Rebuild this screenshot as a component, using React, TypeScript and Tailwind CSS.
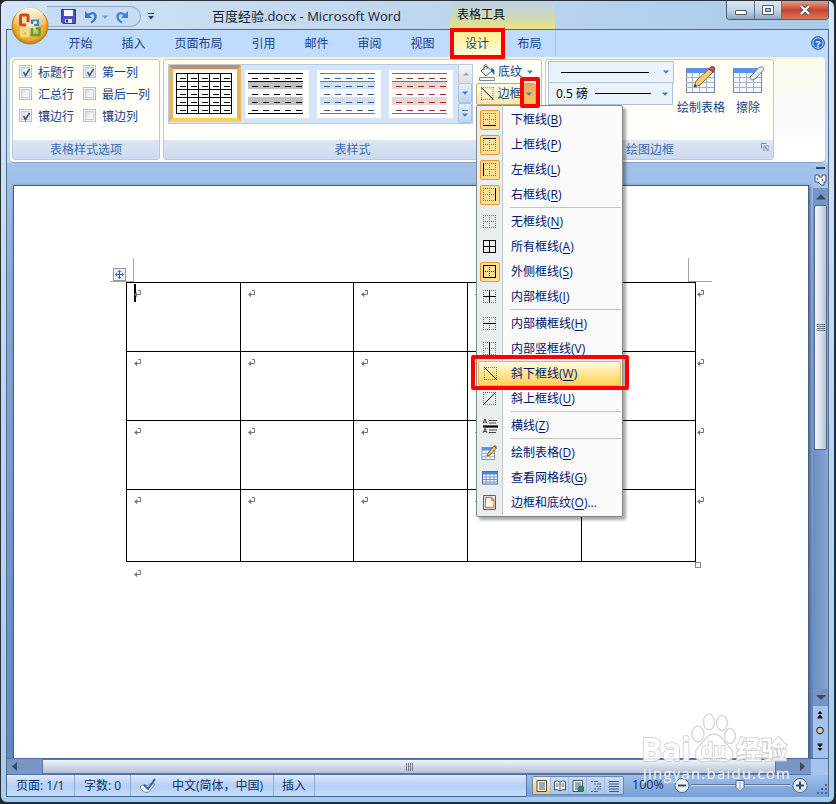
import React from 'react';
import clsx from 'clsx';

const TABS = ['开始', '插入', '页面布局', '引用', '邮件', '审阅', '视图'];

const OPTIONS = [
  [
    { label: '标题行', on: true },
    { label: '汇总行', on: false },
    { label: '镶边行', on: true },
  ],
  [
    { label: '第一列', on: true },
    { label: '最后一列', on: false },
    { label: '镶边列', on: false },
  ],
];

type MenuItem = { icon: string; label: string; k: string; on?: boolean; hot?: boolean; tail?: string };

const MENU: MenuItem[][] = [
  [
    { icon: 'bottom', label: '下框线', k: 'B', on: true },
    { icon: 'top', label: '上框线', k: 'P', on: true },
    { icon: 'left', label: '左框线', k: 'L', on: true },
    { icon: 'right', label: '右框线', k: 'R', on: true },
  ],
  [
    { icon: 'none', label: '无框线', k: 'N' },
    { icon: 'all', label: '所有框线', k: 'A' },
    { icon: 'outer', label: '外侧框线', k: 'S', on: true },
    { icon: 'inner', label: '内部框线', k: 'I' },
  ],
  [
    { icon: 'innerH', label: '内部横框线', k: 'H' },
    { icon: 'innerV', label: '内部竖框线', k: 'V' },
    { icon: 'down', label: '斜下框线', k: 'W', hot: true },
    { icon: 'up', label: '斜上框线', k: 'U' },
  ],
  [{ icon: 'rule', label: '横线', k: 'Z' }],
  [
    { icon: 'draw', label: '绘制表格', k: 'D' },
    { icon: 'grid', label: '查看网格线', k: 'G' },
    { icon: 'page', label: '边框和底纹', k: 'O', tail: '...' },
  ],
];

const ROWS = ['h-[69px]', 'h-[69px]', 'h-[69px]', 'h-[73px]'];

function Caret({ className }: { className?: string }) {
  return (
    <svg width="6" height="4" viewBox="0 0 6 4" className={clsx('shrink-0', className)}>
      <path d="M0 .5h6L3 3.8z" fill="#4a7ab8" />
    </svg>
  );
}

function BorderIcon({ kind }: { kind: string }) {
  const dots = { stroke: '#6f7480', strokeDasharray: '1 1', fill: 'none' };
  const line = { stroke: '#000', fill: 'none' };
  if (kind === 'rule') {
    return (
      <svg width="16" height="16" viewBox="0 0 16 16">
        <path d="M1 5.5 3 1l2 4.5M1.8 4h2.4M1 15l2-4.5L5 15M1.8 13.5h2.4M7 2.5h8M7 5h7M7 12h8M7 14.5h7" stroke="#333" fill="none" strokeWidth=".9" />
        <path d="M1 8.5h15" stroke="#000" strokeWidth="2.2" />
      </svg>
    );
  }
  if (kind === 'draw') {
    return (
      <svg width="17" height="17" viewBox="0 0 17 17">
        <rect x="1" y="3.5" width="12.5" height="12" fill="#f4f8ff" stroke="#7f97c0" />
        <path d="M1 3.5h12.5v3H1z" fill="#5f8fe4" />
        <path d="M1 9.5h12M1 12.5h12M5 6.5v9M9 6.5v9" stroke="#a9bbda" />
        <path d="m6 12 1-3 6-7 2.5 2L9 11z" fill="#f3c65a" stroke="#6b5126" strokeWidth=".8" />
        <path d="m12.5 2.6 1.5-1.5 2 1.7-1.3 1.7z" fill="#b9523c" />
      </svg>
    );
  }
  if (kind === 'grid') {
    return (
      <svg width="17" height="14" viewBox="0 0 17 14" className="ml-[2px]">
        <rect x=".5" y=".5" width="15" height="12.5" fill="#fff" stroke="#4a6ca8" />
        <path d="M1 1h14.500v2.500H1z" fill="#4b84e0" />
        <path d="M1 6h15M1 8.500h15M1 11h15M4 3v10M8 3v10M12 3v10" stroke="#6d93cf" />
      </svg>
    );
  }
  if (kind === 'page') {
    return (
      <svg width="15" height="17" viewBox="0 0 15 17">
        <path d="M1.500 1.500h12v14h-12z" fill="#e8f0fb" stroke="#4d6486" />
        <path d="M3.500 3.500h6l2.500 2.500v7.500H3.500z" fill="#fff" stroke="#d08a2a" strokeWidth="1.300" />
        <path d="M9.500 3v3.500H12" stroke="#d08a2a" fill="none" />
      </svg>
    );
  }
  return (
    <svg width="14" height="14" viewBox="0 0 14 14" shapeRendering={kind === 'down' || kind === 'up' ? 'auto' : 'crispEdges'}>
      {kind !== 'outer' && kind !== 'all' && <path d="M0 .5h13M0 12.500h13M.5 0v13M12.500 0v13" {...dots} />}
      {kind !== 'down' && kind !== 'up' && kind !== 'all' && kind !== 'outer' && <path d="M0 6.500h13M6.500 0v13" {...dots} />}
      {kind === 'outer' && <path d="M2 6.500h9M6.500 2v9" {...dots} stroke="#333" />}
      {kind === 'bottom' && <path d="M0 12.500h13" {...line} />}
      {kind === 'top' && <path d="M0 .5h13" {...line} />}
      {kind === 'left' && <path d="M.5 0v13" {...line} />}
      {kind === 'right' && <path d="M12.500 0v13" {...line} />}
      {(kind === 'outer' || kind === 'all') && <path d="M.5.5h12v12H.5z" {...line} />}
      {(kind === 'all' || kind === 'inner' || kind === 'innerH') && <path d="M0 6.500h13" {...line} />}
      {(kind === 'all' || kind === 'inner' || kind === 'innerV') && <path d="M6.500 0v13" {...line} />}
      {kind === 'down' && <path d="m.5.5 12 12" {...line} />}
      {kind === 'up' && <path d="m.5 12.500 12-12" {...line} />}
    </svg>
  );
}

function OfficeButton() {
  return (
    <svg width="38" height="38" viewBox="0 0 38 38" className="absolute top-[6px] left-[5px] z-10">
      <defs>
        <radialGradient id="orb" cx=".5" cy=".45" r=".55">
          <stop offset="0" stopColor="#f9f0e0" />
          <stop offset=".55" stopColor="#e9b556" />
          <stop offset=".8" stopColor="#f0a91d" />
          <stop offset="1" stopColor="#b27613" />
        </radialGradient>
        <linearGradient id="orbTop" x2="0" y2="1">
          <stop offset="0" stopColor="#fffbe8" />
          <stop offset="1" stopColor="#fff" stopOpacity=".1" />
        </linearGradient>
      </defs>
      <circle cx="19" cy="19" r="18" fill="url(#orb)" stroke="#a5854e" />
      <path d="M2.500 17a16.500 16.500 0 0 1 33 0q-16 5-33 0z" fill="url(#orbTop)" />
      <g fill="none">
        <path d="M17 15v-5.500q0-1.500-1.500-1.500H11q-1.500 0-1.500 1.500v7q0 1.500 1.500 1.500h4" stroke="#d9480f" strokeWidth="3" />
        <path d="M21 17v-3.500h6V18h-4" stroke="#3389c9" strokeWidth="2.200" />
        <path d="M17 21h-6.500v8H17v-4" stroke="#fbe08a" strokeWidth="2.400" />
        <path d="M21 21v7h7.500v-6.500H25" stroke="#58a33a" strokeWidth="2.600" />
        <path d="M12 26q3-4 5-1M23 15q2-2 3 1" stroke="#fff" strokeOpacity=".7" />
      </g>
    </svg>
  );
}

function TitleBar() {
  return (
    <div className="relative flex h-[28px] shrink-0 items-start bg-linear-to-r from-[#d2e3f6] via-[#c3d9ef] via-40% to-[#a9cbea]">
      <OfficeButton />
      <div className="mt-[5px] ml-[41px] flex h-[21px] w-[94px] items-center rounded-r-full border border-l-0 border-[#93a7c3] bg-[#c6dbf4] pl-[14px]">
        <svg width="15" height="15" viewBox="0 0 15 15" className="shrink-0">
          <path d="M.5.5h14v14H2L.5 13z" fill="#4a50c0" stroke="#343b96" />
          <path d="M3 1h9v6H3z" fill="#f4f6ff" />
          <path d="M4 10h7v4H4z" fill="#e4e6f0" />
          <path d="M5 10.500h2v3H5z" fill="#2b2f75" />
        </svg>
        <svg width="14" height="14" viewBox="0 0 14 14" className="ml-2 shrink-0">
          <path d="M4 5q6-4 7.500.5Q12 10 7 12.500" stroke="#3f72c8" strokeWidth="2.400" fill="none" />
          <path d="M1 1v7h7z" fill="#3f72c8" />
        </svg>
        <Caret className="ml-1 opacity-70" />
        <svg width="14" height="14" viewBox="0 0 14 14" className="ml-[7px] shrink-0">
          <path d="M10 5Q4 1 2.500 5.500 2 10 7 12.500" stroke="#4382cf" strokeWidth="2.400" fill="none" />
          <path d="M13 1v7H6z" fill="#4382cf" />
        </svg>
      </div>
      <svg width="6" height="7" viewBox="0 0 6 7" className="mt-[12px] ml-[7px]">
        <path d="M0 .5h6" stroke="#24426f" />
        <path d="M0 3h6L3 6.500z" fill="#24426f" />
      </svg>
      <div className="mt-[5px] ml-[58px] w-[238px] text-[13px] leading-[20px] whitespace-nowrap text-[#16202f]">百度经验.docx - Microsoft Word</div>
      <div className="mt-[2px] h-[26px] w-[106px] border-r border-[#d7d18a] bg-linear-to-b from-[#c0d3df] via-[#ccd8c0] to-[#ece27a] pt-[2px] pl-[7px] text-[12px] leading-[20px] text-[#111]">
        表格工具
      </div>
      <div className="ml-[170px] flex h-[19px] overflow-hidden rounded-b-[4px] border border-t-0 border-[#4e5d70]">
        <div className="grid w-[28px] place-items-center border-r border-[#607086] bg-linear-to-b from-[#d9e5f1] via-[#c6d6e6] to-[#8faac6]">
          <div className="mt-1 h-[5px] w-3 rounded-[1px] border border-[#545b69] bg-white" />
        </div>
        <div className="grid w-[27px] place-items-center border-r border-[#607086] bg-linear-to-b from-[#d9e5f1] via-[#c6d6e6] to-[#8faac6]">
          <div className="grid h-[10px] w-3 place-items-center rounded-[1px] border border-[#545b69] bg-white">
            <div className="h-1 w-[6px] border border-[#545b69] bg-[#a9bdd4]" />
          </div>
        </div>
        <div className="grid w-[46px] place-items-center bg-linear-to-b from-[#e3a08f] via-[#c6432d] via-50% to-[#d87a5e]">
          <svg width="14" height="12" viewBox="0 0 14 12">
            <path d="m3 2 8 8m0-8-8 8" stroke="#4b4a58" strokeWidth="4" />
            <path d="m3 2 8 8m0-8-8 8" stroke="#fff" strokeWidth="2.400" />
          </svg>
        </div>
      </div>
    </div>
  );
}

function TabRow() {
  return (
    <div className="flex h-[28px] shrink-0 items-stretch border-t border-[#596a80] bg-[#bfdbff] pl-[47px] text-[12px] text-[#15428b]">
      {TABS.map((t) => (
        <div key={t} className={clsx('flex shrink-0 items-center justify-center', t.length > 2 ? 'w-[77px]' : 'w-[53px]')}>
          {t}
        </div>
      ))}
      <div className="ml-px flex w-[54px] items-center justify-center rounded-t-[3px] border border-b-0 border-[#c9bb6f] bg-linear-to-b from-[#fff08b] to-[#fffbd8]">设计</div>
      <div className="flex w-[52px] items-center justify-center border-r border-[#b1c5dc]">布局</div>
      <svg width="14" height="14" viewBox="0 0 14 14" className="mt-[6px] ml-auto mr-[3px]">
        <circle cx="7" cy="7" r="6.300" fill="#2769d8" stroke="#1d4790" />
        <circle cx="7" cy="7" r="5.200" fill="none" stroke="#cfe1ff" />
        <text x="7" y="10.500" textAnchor="middle" fontSize="9.500" fontWeight="700" fill="#fff" fontFamily="Liberation Sans, sans-serif">?</text>
      </svg>
    </div>
  );
}

function Check({ on }: { on: boolean }) {
  return (
    <span className="-mt-[3px] grid size-[13px] shrink-0 place-items-center border border-[#abc1de] bg-[#f4f4f4]">
      <span className="grid size-[9px] place-items-center border border-[#c9cdd3] bg-linear-to-br from-[#dcdee2] to-white">
        {on && (
          <svg width="9" height="9" viewBox="0 0 9 9">
            <path d="m1.500 4 2 3.500L7.500 1" stroke="#3c5a8f" strokeWidth="1.700" fill="none" />
          </svg>
        )}
      </span>
    </span>
  );
}

function Thumb({ tone }: { tone: 'grid' | 'gray' | 'blue' | 'red' }) {
  const ink = { grid: '#000', gray: '#000', blue: '#376092', red: '#943634' }[tone];
  const rule = { grid: '#000', gray: '#000', blue: '#4f81bd', red: '#c0504d' }[tone];
  const band = { grid: 'none', gray: '#c0c0c0', blue: '#d3dfee', red: '#efd3d2' }[tone];
  return (
    <svg width="64" height="48" viewBox="0 0 64 48" className="shrink-0 bg-white" shapeRendering="crispEdges">
      <path d="M3 12h55v7H3zM3 27h55v8H3z" fill={band} />
      <path d="M3 3.500h55M3 11.500h55M3 43.500h55" stroke={rule} />
      {tone === 'grid' && <path d="M3.500 3v41M14.500 3v41M25.500 3v41M36.500 3v41M47.500 3v41M58.500 3v41M3 19.500h56M3 27.500h56M3 35.500h56" stroke={rule} />}
      <path d="M7 8.500h51M7 16.500h51M7 24.500h51M7 32.500h51M7 40.500h51" stroke={ink} strokeDasharray="6 5" />
    </svg>
  );
}

function Group({ title, className, children }: { title: React.ReactNode; className: string; children: React.ReactNode }) {
  return (
    <div className={clsx('flex h-[101px] shrink-0 flex-col overflow-hidden rounded-[3px] border border-[#c3c8ce] bg-linear-to-b from-[#fffef2] to-white', className)}>
      <div className="h-[80px] shrink-0">{children}</div>
      <div className="flex h-[19px] items-center justify-center bg-linear-to-b from-[#dbe7f5] to-[#ccdaef] text-[12px] text-[#3f6bb0]">{title}</div>
    </div>
  );
}

function BigTableIcon({ tool }: { tool: 'pencil' | 'eraser' }) {
  return (
    <svg width="32" height="30" viewBox="0 0 32 30">
      <rect x="1.500" y="3.500" width="28" height="24" fill="#f4f8fd" stroke="#7385a3" />
      <path d="M1 3h29v5H1z" fill="#5d8fe8" />
      <path d="M1 12.500h28M1 17.500h28M1 22.500h28M7.500 8v19M14.500 8v19M21.500 8v19" stroke="#a3b3ca" />
      {tool === 'pencil' ? (
        <g strokeWidth=".8">
          <path d="m9 22 2-6L24 4l4 3-13 13z" fill="#f5cf6a" stroke="#72571f" />
          <path d="m9 22 1-3 2 2z" fill="#333" />
          <path d="m24 4 2-2.500q3-1 4 2L28 7z" fill="#c6524b" stroke="#7c3a35" />
        </g>
      ) : (
        <path d="M18 12 27 2.500q4-2 5 2L23 14q-5 2.500-5-2z" fill="#e4ebf5" stroke="#68799c" />
      )}
    </svg>
  );
}

function Ribbon() {
  return (
    <div className="flex h-[106px] shrink-0 bg-[#bfdbff] px-[3px]">
      <div className="flex h-[105px] w-[816px] gap-[3px] rounded-[4px] border-t-2 border-[#fbf3cf] bg-linear-to-b from-[#fffcec] via-[#fafafa] to-white pl-[2px] shadow-[0_1px_1px_#7f9cc4]">
        <Group title="表格样式选项" className="w-[148px]">
          <div className="flex pt-[2px] pl-[6px] text-[12px] text-[#15428b]">
            {OPTIONS.map((col, i) => (
              <div key={i} className="w-[64px] shrink-0">
                {col.map((o) => (
                  <div key={o.label} className="flex h-[22px] items-center gap-[6px] whitespace-nowrap">
                    <Check on={o.on} />
                    {o.label}
                  </div>
                ))}
              </div>
            ))}
          </div>
        </Group>
        <Group title="表样式" className="w-[379px]">
          <div className="flex h-full pt-[4px] pl-[4px]">
            <div className="flex h-[60px] w-[305px] border border-[#b2cbe9] bg-[#d5e5f7]">
              <div className="flex h-[57px] w-[72px] items-center justify-center rounded-[2px] border-4 border-t-[#c09063] border-r-[#eeb156] border-b-[#fbd150] border-l-[#eeb156]">
                <Thumb tone="grid" />
              </div>
              <div className="flex flex-1 gap-2 pt-[5px] pl-[4px]">
                <Thumb tone="gray" />
                <Thumb tone="blue" />
                <Thumb tone="red" />
              </div>
              <div className="flex w-[14px] flex-col">
                <div className="grid flex-1 place-items-center border-l border-[#c2c6cb] bg-linear-to-b from-[#f5f6f7] to-[#dcdee1]">
                  <Caret className="rotate-180 opacity-60 grayscale" />
                </div>
                <div className="grid flex-1 place-items-center rounded-[2px] border border-[#a9c4e6] bg-linear-to-b from-[#e4effc] to-[#bed6f3]">
                  <Caret />
                </div>
                <div className="grid flex-1 place-items-center rounded-[2px] border border-[#a9c4e6] bg-linear-to-b from-[#e4effc] to-[#bed6f3]">
                  <div className="flex flex-col items-center gap-[2px]">
                    <div className="h-px w-[6px] bg-[#4a7ab8]" />
                    <Caret />
                  </div>
                </div>
              </div>
            </div>
            <div className="-mt-[3px] ml-[3px] w-[64px] text-[12px] text-[#15428b]">
              <div className="flex h-[22px] items-center pl-[3px]">
                <svg width="17" height="17" viewBox="0 0 17 17">
                  <path d="m2 7 5-5 6 5-6 5z" fill="#edf3fb" stroke="#4a6488" />
                  <path d="M5 6V1.500q2-2 3 0V5" fill="none" stroke="#4a6488" />
                  <path d="M12 4q5 1 3 7l-2-3z" fill="#2f5694" />
                  <path d="M.5 13.500h15v3H.5z" fill="#fff" stroke="#7c8795" />
                </svg>
                <span className="ml-[2px]">底纹</span>
                <Caret className="ml-[5px]" />
              </div>
              <div className="flex h-[22px] w-[60px] items-center rounded-[2px] border border-[#c5ab72] bg-linear-to-b from-[#fffbe9] to-[#fae7ab] pl-[4px]">
                <BorderIcon kind="down" />
                <span className="ml-[3px] w-[25px] shrink-0">边框</span>
                <div className="grid h-full w-[13px] place-items-center bg-linear-to-b from-[#e2a968] to-[#ffc94d]">
                  <Caret />
                </div>
              </div>
            </div>
          </div>
        </Group>
        <Group
          className="w-[229px]"
          title={
            <>
              <span className="ml-auto">绘图边框</span>
              <svg width="8" height="8" viewBox="0 0 8 8" className="mt-[-5px] mr-1 ml-[87px]">
                <path d="M.5 5.500v-5h5" stroke="#6c88b2" fill="none" />
                <path d="M3 3h5v5H3z" fill="#fff" stroke="#6c88b2" />
                <path d="m4 4 3 3" stroke="#6c88b2" strokeWidth="1.500" />
              </svg>
            </>
          }
        >
          <div className="flex pl-[2px]">
            <div className="shrink-0 pt-px">
              <div className="flex h-[22px] w-[126px] items-center border border-[#abc1de] bg-[#eaf2fb] pl-3">
                <div className="h-px w-[88px] bg-black" />
                <Caret className="ml-auto mr-[4px]" />
              </div>
              <div className="flex h-[22px] w-[125px] items-center border border-t-0 border-[#abc1de] bg-[#eaf2fb] pl-[7px] text-[12px] whitespace-nowrap text-black">
                0.5 磅
                <div className="ml-[7px] h-px w-[56px] bg-black" />
                <Caret className="ml-auto mr-[4px]" />
              </div>
            </div>
            <div className="flex w-[54px] flex-col items-center pt-[5px] text-[12px] leading-[18px] whitespace-nowrap text-[#15428b]">
              <BigTableIcon tool="pencil" />
              <span className="mt-[4px]">绘制表格</span>
            </div>
            <div className="flex w-[40px] flex-col items-center pt-[5px] text-[12px] leading-[18px] text-[#15428b]">
              <BigTableIcon tool="eraser" />
              <span className="mt-[4px]">擦除</span>
            </div>
          </div>
        </Group>
      </div>
    </div>
  );
}

function Pilcrow({ className }: { className?: string }) {
  return (
    <svg width="8" height="8" viewBox="0 0 8 8" className={clsx('shrink-0', className)}>
      <path d="M4 .5h2.500v4H2" fill="none" stroke="#777" />
      <path d="M0 4.500 3.200 2v5.200z" fill="#777" />
    </svg>
  );
}

function Page() {
  return (
    <div className="h-[573px] w-[796px] shrink-0 border border-b-0 border-[#4c5f7d] bg-white pt-[72px] shadow-[1px_1px_3px_#405e8e]">
      <div className="ml-[96px] flex h-6 w-[602px] items-end">
        <div className="flex h-6 w-6 items-end justify-end border-r border-b border-[#a5a5a5]">
          <div className="mr-[7px] grid size-[13px] shrink-0 place-items-center border border-[#979797] bg-[#eef2f8]">
            <svg width="9" height="9" viewBox="0 0 9 9">
              <path d="M4.500 1v7M1 4.500h7" stroke="#2c62c2" />
              <path d="M4.500 0 6.500 2h-4zM4.500 9l2-2h-4zM0 4.500l2-2v4zM9 4.500l-2-2v4z" fill="#2c62c2" />
            </svg>
          </div>
        </div>
        <div className="ml-auto size-6 border-b border-l border-[#a5a5a5]" />
      </div>
      {ROWS.map((h, r) => (
        <div key={r} className={clsx('ml-[112px] flex', h)}>
          <div className={clsx('grid grid-cols-[114px_113px_114px_114px_114px] border-t border-r border-black', r === 3 && 'border-b')}>
            {[0, 1, 2, 3, 4].map((c) => (
              <div key={c} className="flex border-l border-black pt-[7px] pl-[7px]">
                {r === 0 && c === 0 && <div className="-mt-[6px] -mr-[2px] h-[18px] w-[2px] bg-black" />}
                <Pilcrow />
              </div>
            ))}
          </div>
          <Pilcrow className="mt-[8px] ml-px" />
        </div>
      ))}
      <div className="ml-[681px] size-[6px] border border-[#888]" />
      <Pilcrow className="mt-[2px] ml-[120px]" />
    </div>
  );
}

function VScroll() {
  return (
    <div className="flex w-[15px] flex-col items-center bg-[#a5c3ef]">
      <div className="mt-[4px] h-[2px] w-[9px] bg-[#3c4966]" />
      <svg width="13" height="13" viewBox="0 0 13 13" className="mt-[4px] shrink-0">
        <path d="M1 2h4v2h3V2h4v7h-2v3H7L4 9H1z" fill="#eff1f8" stroke="#4a5772" />
        <path d="m3 5 1 2m4-1 1 2" stroke="#4a5772" />
      </svg>
      <div className="mt-[2px] grid h-[17px] w-full shrink-0 place-items-center bg-[#7596c5]">
        <svg width="10" height="6" viewBox="0 0 10 6">
          <path d="M0 5.500h10L5 0z" fill="#3c4966" />
        </svg>
      </div>
      <div className="flex h-[484px] w-full shrink-0 flex-col bg-linear-to-r from-[#6c8dbf] to-[#86a7d4]">
        <div className="mx-px grid h-[245px] place-items-center rounded-[2px] border border-[#4f6b99] bg-linear-to-r from-[#f3f6fa] via-[#dbe2eb] to-[#b4c3d8]">
          <div className="flex flex-col gap-[1px]">
            <div className="h-px w-2 bg-[#6e7a8d]" />
            <div className="h-px w-2 bg-[#6e7a8d]" />
            <div className="h-px w-2 bg-[#6e7a8d]" />
            <div className="h-px w-2 bg-[#6e7a8d]" />
          </div>
        </div>
      </div>
      <div className="grid h-[17px] w-full shrink-0 place-items-center bg-[#7596c5]">
        <svg width="10" height="5" viewBox="0 0 10 5">
          <path d="M0 0h10L5 5z" fill="#3c4966" />
        </svg>
      </div>
      <svg width="8" height="42" viewBox="0 0 8 42" className="mt-[4px] mr-[2px] shrink-0">
        <path d="M4 1 6.500 4h-5zM4 4.500l2.500 3h-5zM1.500 8h5M4 41l2.500-3h-5zM4 37.500l2.500-3h-5zM1.500 34h5" fill="#000" />
        <path d="M1.500 8h5M1.500 34h5" stroke="#000" />
        <circle cx="4" cy="20.500" r="3.300" fill="#c9c9c1" stroke="#111" />
      </svg>
    </div>
  );
}

function Workspace() {
  return (
    <div className="flex h-[595px] shrink-0 bg-linear-to-b from-[#a3c3ec] via-[#88a9d9] via-20% to-[#5e88c4]">
      <div className="flex w-[806px] shrink-0 items-end overflow-hidden pl-[6px]">
        <Page />
      </div>
      <VScroll />
    </div>
  );
}

function HScroll() {
  return (
    <div className="flex h-[17px] shrink-0 border-t border-[#4f6fa5] bg-[#a5c3ef]">
      <div className="flex w-[804px] border-b border-[#5473a8] bg-[#7897c4]">
        <div className="flex w-[35px] items-center pl-[5px]">
          <svg width="5" height="9" viewBox="0 0 5 9">
            <path d="M5 0v9L0 4.500z" fill="#3c4966" />
          </svg>
        </div>
        <div className="grid w-[734px] place-items-center border border-[#5d7399] bg-linear-to-b from-[#f3f5f9] via-[#d2dae5] to-[#b5c3d7]">
          <div className="flex gap-px">
            <div className="h-2 w-px bg-[#6e7a8d]" />
            <div className="h-2 w-px bg-[#6e7a8d]" />
            <div className="h-2 w-px bg-[#6e7a8d]" />
            <div className="h-2 w-px bg-[#6e7a8d]" />
          </div>
        </div>
        <div className="flex flex-1 items-center justify-end pr-[6px]">
          <svg width="5" height="9" viewBox="0 0 5 9">
            <path d="M0 0v9l5-4.500z" fill="#3c4966" />
          </svg>
        </div>
      </div>
    </div>
  );
}

const seg = 'flex items-center border-r border-[#8aaddb] whitespace-nowrap';

function StatusBar() {
  return (
    <div className="flex h-[22px] shrink-0 items-stretch border-b border-[#42618f] bg-linear-to-b from-[#dceafc] via-[#b3d0f7] via-50% to-[#c5dcfa] text-[12px] text-[#0d2f66]">
      <div className={clsx(seg, 'w-[68px] pl-[9px]')}>页面: 1/1</div>
      <div className={clsx(seg, 'w-[56px] pl-[9px]')}>字数: 0</div>
      <div className={clsx(seg, 'w-[143px] pl-[8px]')}>
        <svg width="18" height="16" viewBox="0 0 18 16">
          <path d="M1 9q4-4 7-1 3-4 8-2l-6 8Q4 16 1 9z" fill="#f5f6fa" stroke="#7b879c" />
          <path d="m5 7 4 4 7-10" fill="none" stroke="#2c60bd" strokeWidth="2" />
        </svg>
        <span className="ml-[15px]">中文(简体，中国)</span>
      </div>
      <div className={clsx(seg, 'w-[41px] pl-[8px]')}>插入</div>
      <div className="flex flex-1 items-center pl-[211px]">
        <div className="flex h-[22px] flex-1 items-center border-l border-[#5277b0] bg-linear-to-b from-[#9dbfea] to-[#779fd6] pl-[5px]">
          <div className="flex h-[19px] w-[92px] shrink-0 overflow-hidden rounded-[2px] border border-[#6687b8] bg-linear-to-b from-[#c8ddf8] to-[#a8c6ee]">
            {['print', 'read', 'web', 'outline', 'draft'].map((v, i) => (
              <div key={v} className={clsx('grid w-[18px] place-items-center border-r border-[#a2bce0] last:border-0', i === 0 && 'bg-linear-to-b from-[#fff0c9] to-[#f8c65a]')}>
                <svg width="12" height="12" viewBox="0 0 12 12">
                  {(v === 'print' || v === 'web') && (
                    <g fill="none" stroke="#444d5c">
                      <path d="M1 .5h9.500v11H1z" fill="#fff" />
                      <path d="M3 3h6M3 5h6M3 7h6M3 9h6" />
                    </g>
                  )}
                  {v === 'web' && <circle cx="9" cy="9" r="3" fill="#3c8a53" stroke="#285b9a" />}
                  {v === 'read' && <path d="M6 2Q3 0 .5 1.500V10Q3 8.500 6 11q3-2.500 5.500-1V1.500Q9 0 6 2v9M2 4h2.500M2 6h2.500M7.500 4H10M7.500 6H10" fill="#fff" stroke="#444d5c" />}
                  {v === 'outline' && <path d="M1 1.500h7M4 4h7M6 6.500h5M4 9h7M1 11.500h7" stroke="#566781" strokeDasharray="2 1 7" />}
                  {v === 'draft' && <path d="M1 1.500h10M1 4h10M1 6.500h10M1 9h10M1 11.500h10" stroke="#4b5a72" />}
                </svg>
              </div>
            ))}
          </div>
          <span className="ml-[8px] w-[42px] shrink-0 text-[12.5px]">100%</span>
          <svg width="134" height="20" viewBox="0 0 134 20" className="shrink-0">
            <path d="M17 9.500h99" stroke="#c3daf8" />
            <path d="M17 8.500h99" stroke="#56779f" />
            {[8, 126].map((x) => (
              <circle key={x} cx={x} cy="9.500" r="7" fill="#e9f0f9" stroke="#536885" />
            ))}
            <path d="M4 9.500h8M122 9.500h8M126 5.500v8" stroke="#344c70" strokeWidth="2" />
            <path d="M62 4.500h8v7l-4 4-4-4z" fill="#eef3fa" stroke="#536885" />
            <path d="M66 6v7" stroke="#8195b3" />
          </svg>
          <svg width="12" height="12" viewBox="0 0 12 12" className="mt-[7px] ml-auto">
            <path d="M9 1h2v2H9zM5 5h2v2H5zM9 5h2v2H9zM1 9h2v2H1zM5 9h2v2H5zM9 9h2v2H9z" fill="#46669a" />
          </svg>
        </div>
      </div>
    </div>
  );
}

function BordersMenu() {
  return (
    <div className="absolute top-[105px] left-[476px] w-[147px] rounded-[2px] border border-[#868686] bg-linear-to-r from-[#e9eeee] from-[25px] to-[#fafafa] to-[25px] py-px text-[12px] text-[#00156e] shadow-[3px_3px_3px_rgba(0,0,0,0.35)]">
      {MENU.map((group, g) => (
        <div key={g}>
          {g > 0 && (
            <div className="flex h-[2px] pr-px">
              <div className="mr-[7px] w-[26px] border-r border-[#c5c5c5]" />
              <div className="h-px flex-1 bg-[#c5c5c5]" />
            </div>
          )}
          {group.map((m) => (
            <div
              key={m.k}
              className={clsx(
                'flex h-[25px] items-center whitespace-nowrap',
                m.hot && 'mx-px rounded-[2px] border border-[#dbb755] bg-linear-to-b from-[#fffbe4] via-[#ffe695] via-50% to-[#ffd153]',
              )}
            >
              <span className={clsx('flex h-full shrink-0 items-center justify-center', m.hot ? 'w-[23px]' : 'w-[26px] border-r border-[#c5c5c5]')}>
                <span className={clsx('grid h-[20px] w-[20px] place-items-center', m.on && 'rounded-[2px] border border-[#f0943a] bg-[#ffdf94]')}>
                  <BorderIcon kind={m.icon} />
                </span>
              </span>
              <span className={m.hot ? 'ml-[9px]' : 'ml-[8px]'}>
                {m.label}(<span className="underline underline-offset-2">{m.k}</span>){m.tail}
              </span>
            </div>
          ))}
        </div>
      ))}
    </div>
  );
}

function Watermark() {
  const word = {
    fill: '#fff',
    stroke: '#c9cdd3',
    strokeWidth: 2,
    paintOrder: 'stroke' as const,
    fontWeight: 700,
  };
  return (
    <svg width="156" height="78" viewBox="0 0 156 78" className="absolute top-[710px] left-[638px] opacity-85">
      <g fill="#fff" stroke="#d0d4d9" strokeWidth="1.500">
        <ellipse cx="60" cy="24" rx="6" ry="8" />
        <ellipse cx="71" cy="12" rx="5.500" ry="8" />
        <ellipse cx="84" cy="13" rx="5.500" ry="7.500" />
        <ellipse cx="92" cy="26" rx="5.500" ry="7.500" />
        <path d="M76 24q6 0 10 7 4 5 8 9 4 11-8 12-10-2-20 0-11-1-8-12 3-5 8-9 4-7 10-7z" />
      </g>
      <text x="3" y="51" fontSize="33" textLength="50" lengthAdjust="spacingAndGlyphs" {...word}>Bai</text>
      <text x="63" y="48" fontSize="21" textLength="25" lengthAdjust="spacingAndGlyphs" {...word}>du</text>
      <text x="98" y="49" fontSize="25" textLength="51" lengthAdjust="spacingAndGlyphs" {...word}>经验</text>
      <text x="5" y="69" fontSize="15" textLength="147" fill="#fff" stroke="#b9c4d4" strokeWidth=".8" paintOrder="stroke">jingyan.baidu.com</text>
    </svg>
  );
}

export default function App() {
  return (
    <div className="relative h-[804px] w-[836px] overflow-hidden bg-[#22272f] font-['Open_Sans','Noto_Sans_CJK_SC',sans-serif]">
      <div className="flex h-[803px] w-[835px] flex-col rounded-[7px] border border-[#2a3038] bg-linear-to-b from-[#d6e7f8] via-[#b9d7f5] to-[#a9cdee] pr-[5px] pl-[5px]">
        <TitleBar />
        <div className="flex flex-col border-x border-[#596a80]">
          <TabRow />
          <Ribbon />
          <Workspace />
          <HScroll />
          <StatusBar />
        </div>
      </div>

      <BordersMenu />

      {/* step highlights */}
      <div className="absolute top-[28px] left-[450px] h-[31px] w-[55px] border-4 border-[#f00]" />
      <div className="absolute top-[77px] left-[520px] h-[31px] w-[20px] rounded-[2px] border-4 border-[#f00]" />
      <div className="absolute top-[355px] left-[471px] h-[35px] w-[158px] rounded-[2px] border-4 border-[#f00]" />

      <Watermark />
    </div>
  );
}
